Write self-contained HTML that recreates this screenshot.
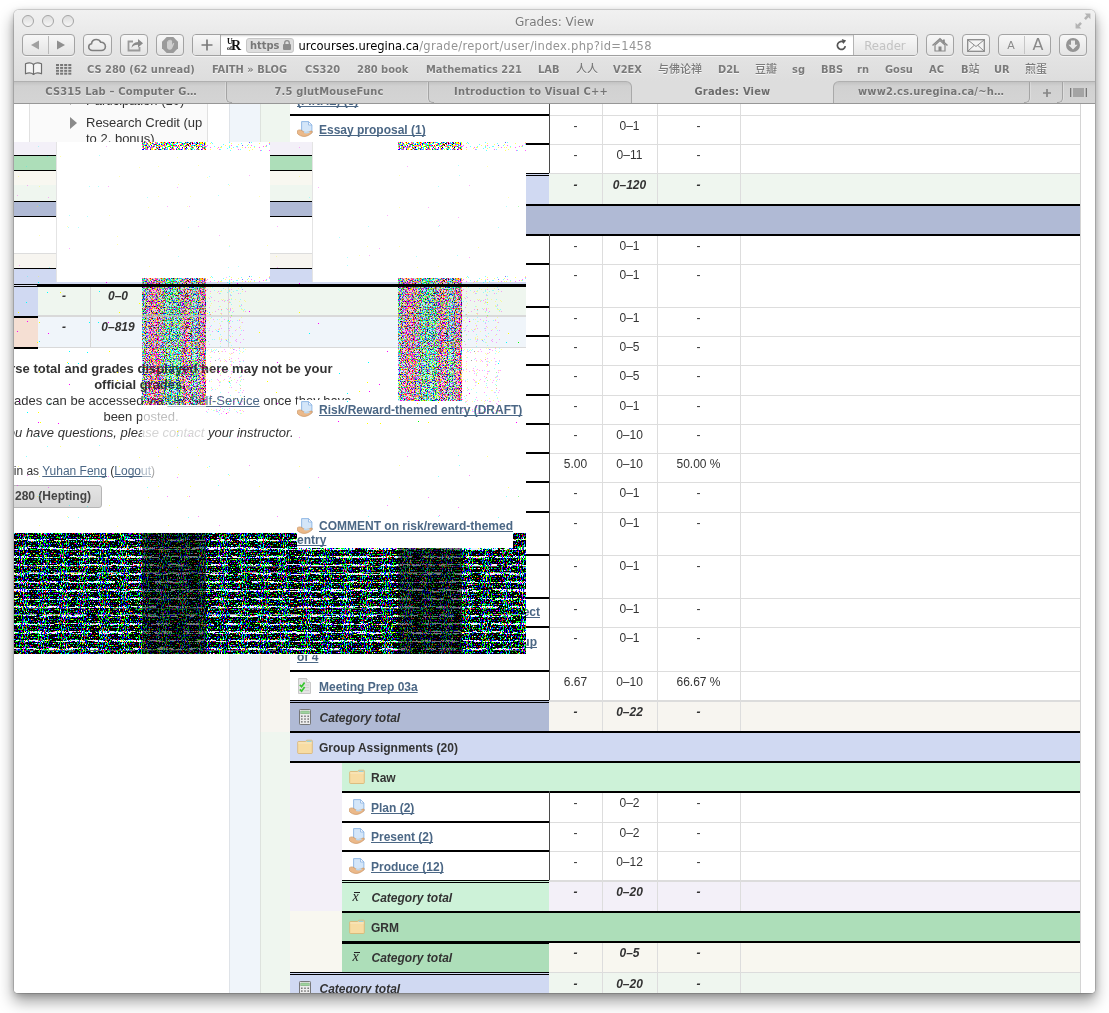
<!DOCTYPE html><html><head><meta charset="utf-8"><title>Grades: View</title><style>
*{box-sizing:border-box;margin:0;padding:0}
html,body{width:1109px;height:1013px;overflow:hidden;background:#fff}
body{position:relative;font-family:"Liberation Sans","Noto Sans CJK SC",sans-serif;font-size:12px;color:#333}
.a{position:absolute}
#win{position:absolute;left:14px;top:10px;width:1081px;height:983px;border-radius:5px 5px 4px 4px;overflow:hidden;background:#fff;
 box-shadow:0 0 0 1px rgba(0,0,0,.13),0 8px 15px 1px rgba(0,0,0,.36),0 2px 6px rgba(0,0,0,.2)}
#pg{position:absolute;left:-14px;top:-10px;width:1109px;height:1013px}
#tb{position:absolute;left:14px;top:10px;width:1081px;height:71px;background:linear-gradient(#f1f1f1,#e9e9e9 35%,#dddddd)}
#tabs{position:absolute;left:14px;top:81px;width:1081px;height:23px;background:#dddddd;border-bottom:1px solid #979797}
.ui{font-family:"DejaVu Sans Condensed","DejaVu Sans","Noto Sans CJK SC",sans-serif}
.btn{position:absolute;top:34px;height:22px;border:1px solid #a3a3a3;border-radius:4px;background:linear-gradient(#f7f7f7,#e4e4e4);box-shadow:0 1px 0 rgba(255,255,255,.6)}
.bm{position:absolute;top:63px;font:bold 11px "DejaVu Sans Condensed","Noto Sans CJK SC",sans-serif;color:#7a7a7a;text-shadow:0 1px 0 rgba(255,255,255,.75);white-space:nowrap;line-height:14px}
.tab{position:absolute;top:81px;height:23px;font:bold 11px "DejaVu Sans Condensed",sans-serif;color:#757575;text-shadow:0 1px 0 rgba(255,255,255,.6);text-align:center;line-height:22px;white-space:nowrap;letter-spacing:.2px}
span.cj{font-weight:500;font-size:11px}
.tab.on{color:#6c6c6c}
.tabgrp{position:absolute;top:81px;height:22px;background:linear-gradient(#c3c3c3,#d1d1d1 4px,#d4d4d4);border-top:1px solid #b0b0b0}
.tabsep{position:absolute;top:82px;width:6px;height:21px;border-left:1px solid #a4a4a4;border-bottom:1px solid #a4a4a4;border-radius:0 0 0 5px;box-shadow:-1px 0 0 rgba(255,255,255,.25)}
.tabsep.r{border-left:none;border-right:1px solid #a4a4a4;border-radius:0 0 5px 0;box-shadow:1px 0 0 rgba(255,255,255,.25)}
.hl{position:absolute;height:1px;background:#ddd}
.vl{position:absolute;width:1px;background:#ddd}
.bl{position:absolute;height:2px;background:#000}
.cell{position:absolute}
.t{position:absolute;white-space:nowrap;line-height:14px;font-size:12px;color:#333}
.c{text-align:center}
.bi{font-weight:bold;font-style:italic}
.b{font-weight:bold}
.lk{color:#4b6785;text-decoration:underline;font-weight:bold;text-decoration-skip-ink:none}
.ic{position:absolute;width:16px;height:16px}
</style></head><body>
<svg width="0" height="0" style="position:absolute">
<defs>
<filter id="nz" x="0" y="0" width="100%" height="100%" color-interpolation-filters="sRGB"><feTurbulence type="fractalNoise" baseFrequency="0.85" numOctaves="2" seed="7" stitchTiles="noStitch"/><feComponentTransfer><feFuncR type="discrete" tableValues="0 1"/><feFuncG type="discrete" tableValues="0 1"/><feFuncB type="discrete" tableValues="0 1"/><feFuncA type="linear" slope="0" intercept="1"/></feComponentTransfer></filter>
<filter id="sp" x="0" y="0" width="100%" height="100%" color-interpolation-filters="sRGB"><feTurbulence type="fractalNoise" baseFrequency="0.9" numOctaves="1" seed="11"/><feComponentTransfer><feFuncR type="discrete" tableValues="0 1 1 1 1 1 1 1"/><feFuncG type="discrete" tableValues="0 1 1 1 1 1 1 1"/><feFuncB type="discrete" tableValues="0 1 1 1 1 1 1 1"/><feFuncA type="linear" slope="0" intercept="1"/></feComponentTransfer></filter>
<g id="i-hand"><path d="M4.600 .6h6.900l3.400 3.400v8H4.600z" fill="#d4e6f9" stroke="#8ab3e3" stroke-width=".9"/><path d="M11.500 .6v3.400h3.400z" fill="#fff" stroke="#8ab3e3" stroke-width=".8" stroke-linejoin="round"/><path d="M.4 9.700c1.400-1 3.100-1 4.400-.2l2.200 1.600c1.600.8 4.300.2 6.300-.8 1.500-.6 2.600.3 1.900 1.200-1.700 2-4.400 3.500-7.100 3.900-3 .4-6.100-1-7.700-2.900z" fill="#ebb98a" stroke="#c58b55" stroke-width=".6"/><path d="M7 11.300c1.700.6 4 .3 5.600-.4" stroke="#bcd7ee" stroke-width="1.500" fill="none"/></g>
<g id="i-folder"><path d="M.7 3.300c0-.5.3-.8.800-.8H8.500l1.200-1.300h4.800c.5 0 .8.300.8.800V13.700c0 .5-.3.800-.8.800H1.500c-.5 0-.8-.3-.8-.8z" fill="#f7dca3" stroke="#d9b270" stroke-width=".8"/><path d="M10 1.700h4.500v1H9.200z" fill="#7fd0ea"/><path d="M1.200 4h13.600" stroke="#fbeccb" stroke-width=".8"/></g>
<g id="i-calc"><rect x="2.500" y=".5" width="11" height="15" rx=".8" fill="#ececec" stroke="#6c6c6c" stroke-width=".9"/><rect x="3.800" y="2" width="8.400" height="2.800" fill="#9ed39e" stroke="#6d9a6d" stroke-width=".4"/><g fill="#7b7b7b"><rect x="4" y="6.500" width="1.600" height="1.500"/><rect x="7.200" y="6.500" width="1.600" height="1.500"/><rect x="10.400" y="6.500" width="1.600" height="1.500"/><rect x="4" y="9.300" width="1.600" height="1.500"/><rect x="7.200" y="9.300" width="1.600" height="1.500"/><rect x="10.400" y="9.300" width="1.600" height="1.500"/><rect x="4" y="12.100" width="1.600" height="1.500"/><rect x="7.200" y="12.100" width="1.600" height="1.500"/><rect x="10.400" y="12.100" width="1.600" height="1.500"/></g></g>
<g id="i-check"><path d="M1.500.5h8l4 4v11h-12z" fill="#e4e4e4" stroke="#bdbdbd" stroke-width=".8"/><path d="M9.500.5v4h4" fill="#f6f6f6" stroke="#bdbdbd" stroke-width=".7"/><path d="M7.500 7h4.500M7.500 9.500h4.500M7.500 12.500h4.500" stroke="#cfcfcf" stroke-width=".9"/><path d="M2.800 6.800l1.800 1.900 3-4.200" stroke="#34c52c" stroke-width="1.700" fill="none"/><path d="M2.800 11.300l1.800 1.900 3-4.200" stroke="#34c52c" stroke-width="1.700" fill="none"/></g>
</defs></svg>
<div id="win"><div id="pg">
<div class="a" id="content" style="left:14px;top:104px;width:1081px;height:889px;background:#fff;overflow:hidden"><div class="a" style="left:-14px;top:-104px;width:1109px;height:1013px">
<div class="a" style="left:28.500px;top:90px;width:179.500px;height:300px;background:#fafafa;border:1px solid #e1e1e1"></div>
<div class="t" style="left:86px;top:93px;font-size:13px;line-height:16px;color:#333">Participation (10)</div>
<div class="t" style="left:86px;top:115px;font-size:13px;line-height:16px;color:#333;white-space:normal;width:125px">Research Credit (up to 2, bonus)</div>
<svg class="a" style="left:69px;top:93px" width="9" height="12"><path d="M1 0l7 6-7 6z" fill="#8a8a8a"/></svg>
<svg class="a" style="left:69px;top:117px" width="9" height="12"><path d="M1 0l7 6-7 6z" fill="#8a8a8a"/></svg>
<div class="a" style="left:228.500px;top:104px;width:31.500px;height:890px;background:#f0f5fa;border-left:1px solid #dfe3e8"></div>
<div class="a" style="left:260px;top:104px;width:30px;height:102px;background:#eff6ef;border-left:1px solid #dde2dd"></div>
<div class="a" style="left:260px;top:206px;width:30px;height:526px;background:#f7f5f0;border-left:1px solid #e2e0dc"></div>
<div class="a" style="left:260px;top:732px;width:30px;height:262px;background:#eff6ef;border-left:1px solid #dde2dd"></div>
<div class="a" style="left:290px;top:761px;width:52px;height:150px;background:#f3f0f8"></div>
<div class="a" style="left:290px;top:911px;width:52px;height:61px;background:#f8f7f0"></div>
<div class="hl" style="left:549.0px;top:86.0px;width:531.0px"></div>
<div class="bl" style="left:290.0px;top:85.0px;width:259.0px"></div>
<div class="t c" style="left:549.0px;top:90.0px;width:53.0px">-</div>
<div class="t c" style="left:602.0px;top:90.0px;width:55.0px">0–1</div>
<div class="t c" style="left:657.0px;top:90.0px;width:83.0px">-</div>
<div class="t lk" style="left:297.0px;top:93.5px">(FINAL) (5)</div>
<div class="hl" style="left:549.0px;top:115.0px;width:531.0px"></div>
<div class="bl" style="left:290.0px;top:114.0px;width:259.0px"></div>
<div class="t c" style="left:549.0px;top:119.0px;width:53.0px">-</div>
<div class="t c" style="left:602.0px;top:119.0px;width:55.0px">0–1</div>
<div class="t c" style="left:657.0px;top:119.0px;width:83.0px">-</div>
<svg class="ic" style="left:297.0px;top:121.3px" viewBox="0 0 16 16"><use href="#i-hand"/></svg>
<div class="t lk" style="left:319.0px;top:123.3px">Essay proposal (1)</div>
<div class="hl" style="left:549.0px;top:144.0px;width:531.0px"></div>
<div class="bl" style="left:290.0px;top:143.0px;width:259.0px"></div>
<div class="t c" style="left:549.0px;top:148.0px;width:53.0px">-</div>
<div class="t c" style="left:602.0px;top:148.0px;width:55.0px">0–11</div>
<div class="t c" style="left:657.0px;top:148.0px;width:83.0px">-</div>
<svg class="ic" style="left:297.0px;top:150.6px" viewBox="0 0 16 16"><use href="#i-hand"/></svg>
<div class="t lk" style="left:319.0px;top:152.6px">Essay (11)</div>
<div class="a" style="left:549.0px;top:173.5px;width:531.0px;height:31.5px;background:#eff6ef"></div>
<div class="a" style="left:549.0px;top:172.8px;width:531.0px;height:1.400px;background:#dcdcdc"></div>
<div class="a" style="left:290.0px;top:172.5px;width:259.0px;height:31.5px;background:#d0d9f2"></div>
<div class="a" style="left:290.0px;top:172.5px;width:259.0px;height:1.100px;background:#000"></div>
<div class="a" style="left:290.0px;top:174.6px;width:259.0px;height:1.200px;background:#000"></div>
<div class="t c bi" style="left:549.0px;top:177.5px;width:53.0px">-</div>
<div class="t c bi" style="left:602.0px;top:177.5px;width:55.0px">0–120</div>
<div class="t c bi" style="left:657.0px;top:177.5px;width:83.0px">-</div>
<svg class="ic" style="left:297.0px;top:181.8px" viewBox="0 0 16 16"><use href="#i-calc"/></svg>
<div class="t bi" style="left:319.5px;top:183.2px">Category total</div>
<div class="a" style="left:290.0px;top:204.0px;width:790.0px;height:30.0px;background:#b0bad5"></div>
<div class="bl" style="left:290.0px;top:204.0px;width:790.0px"></div>
<svg class="ic" style="left:297.0px;top:212.0px" viewBox="0 0 16 16"><use href="#i-folder"/></svg>
<div class="t b" style="left:319.0px;top:213.5px">Individual Assignments (22)</div>
<div class="hl" style="left:549.0px;top:235.0px;width:531.0px"></div>
<div class="bl" style="left:290.0px;top:234.0px;width:259.0px"></div>
<div class="t c" style="left:549.0px;top:239.0px;width:53.0px">-</div>
<div class="t c" style="left:602.0px;top:239.0px;width:55.0px">0–1</div>
<div class="t c" style="left:657.0px;top:239.0px;width:83.0px">-</div>
<svg class="ic" style="left:297.0px;top:241.3px" viewBox="0 0 16 16"><use href="#i-hand"/></svg>
<div class="t lk" style="left:319.0px;top:243.3px">Meeting Prep 01</div>
<div class="hl" style="left:549.0px;top:264.0px;width:531.0px"></div>
<div class="bl" style="left:290.0px;top:263.0px;width:259.0px"></div>
<div class="t c" style="left:549.0px;top:268.0px;width:53.0px">-</div>
<div class="t c" style="left:602.0px;top:268.0px;width:55.0px">0–1</div>
<div class="t c" style="left:657.0px;top:268.0px;width:83.0px">-</div>
<svg class="ic" style="left:297.0px;top:277.3px" viewBox="0 0 16 16"><use href="#i-hand"/></svg>
<div class="t lk" style="left:319.0px;top:279.3px">Meeting Prep 02</div>
<div class="hl" style="left:549.0px;top:307.0px;width:531.0px"></div>
<div class="bl" style="left:290.0px;top:306.0px;width:259.0px"></div>
<div class="t c" style="left:549.0px;top:311.0px;width:53.0px">-</div>
<div class="t c" style="left:602.0px;top:311.0px;width:55.0px">0–1</div>
<div class="t c" style="left:657.0px;top:311.0px;width:83.0px">-</div>
<svg class="ic" style="left:297.0px;top:313.3px" viewBox="0 0 16 16"><use href="#i-hand"/></svg>
<div class="t lk" style="left:319.0px;top:315.3px">Meeting Prep 03</div>
<div class="hl" style="left:549.0px;top:336.0px;width:531.0px"></div>
<div class="bl" style="left:290.0px;top:335.0px;width:259.0px"></div>
<div class="t c" style="left:549.0px;top:340.0px;width:53.0px">-</div>
<div class="t c" style="left:602.0px;top:340.0px;width:55.0px">0–5</div>
<div class="t c" style="left:657.0px;top:340.0px;width:83.0px">-</div>
<svg class="ic" style="left:297.0px;top:342.3px" viewBox="0 0 16 16"><use href="#i-hand"/></svg>
<div class="t lk" style="left:319.0px;top:344.3px">Journal entry 1</div>
<div class="hl" style="left:549.0px;top:365.0px;width:531.0px"></div>
<div class="bl" style="left:290.0px;top:364.0px;width:259.0px"></div>
<div class="t c" style="left:549.0px;top:369.0px;width:53.0px">-</div>
<div class="t c" style="left:602.0px;top:369.0px;width:55.0px">0–5</div>
<div class="t c" style="left:657.0px;top:369.0px;width:83.0px">-</div>
<svg class="ic" style="left:297.0px;top:371.8px" viewBox="0 0 16 16"><use href="#i-hand"/></svg>
<div class="t lk" style="left:319.0px;top:373.8px">Journal entry 2</div>
<div class="hl" style="left:549.0px;top:395.0px;width:531.0px"></div>
<div class="bl" style="left:290.0px;top:394.0px;width:259.0px"></div>
<div class="t c" style="left:549.0px;top:399.0px;width:53.0px">-</div>
<div class="t c" style="left:602.0px;top:399.0px;width:55.0px">0–1</div>
<div class="t c" style="left:657.0px;top:399.0px;width:83.0px">-</div>
<svg class="ic" style="left:297.0px;top:401.3px" viewBox="0 0 16 16"><use href="#i-hand"/></svg>
<div class="t lk" style="left:319.0px;top:403.3px">Risk/Reward-themed entry (DRAFT)</div>
<div class="hl" style="left:549.0px;top:424.0px;width:531.0px"></div>
<div class="bl" style="left:290.0px;top:423.0px;width:259.0px"></div>
<div class="t c" style="left:549.0px;top:428.0px;width:53.0px">-</div>
<div class="t c" style="left:602.0px;top:428.0px;width:55.0px">0–10</div>
<div class="t c" style="left:657.0px;top:428.0px;width:83.0px">-</div>
<div class="hl" style="left:549.0px;top:453.0px;width:531.0px"></div>
<div class="bl" style="left:290.0px;top:452.0px;width:259.0px"></div>
<div class="t c" style="left:549.0px;top:457.0px;width:53.0px">5.00</div>
<div class="t c" style="left:602.0px;top:457.0px;width:55.0px">0–10</div>
<div class="t c" style="left:657.0px;top:457.0px;width:83.0px">50.00 %</div>
<div class="hl" style="left:549.0px;top:482.0px;width:531.0px"></div>
<div class="bl" style="left:290.0px;top:481.0px;width:259.0px"></div>
<div class="t c" style="left:549.0px;top:486.0px;width:53.0px">-</div>
<div class="t c" style="left:602.0px;top:486.0px;width:55.0px">0–1</div>
<div class="t c" style="left:657.0px;top:486.0px;width:83.0px">-</div>
<div class="hl" style="left:549.0px;top:511.7px;width:531.0px"></div>
<div class="bl" style="left:290.0px;top:510.7px;width:259.0px"></div>
<div class="t c" style="left:549.0px;top:515.7px;width:53.0px">-</div>
<div class="t c" style="left:602.0px;top:515.7px;width:55.0px">0–1</div>
<div class="t c" style="left:657.0px;top:515.7px;width:83.0px">-</div>
<svg class="ic" style="left:297.0px;top:517.7px" viewBox="0 0 16 16"><use href="#i-hand"/></svg>
<div class="t lk" style="left:297.0px;top:518.7px;white-space:normal;width:235px;text-indent:22px">COMMENT on risk/reward-themed<br>entry</div>
<div class="hl" style="left:549.0px;top:555.0px;width:531.0px"></div>
<div class="bl" style="left:290.0px;top:554.0px;width:259.0px"></div>
<div class="t c" style="left:549.0px;top:559.0px;width:53.0px">-</div>
<div class="t c" style="left:602.0px;top:559.0px;width:55.0px">0–1</div>
<div class="t c" style="left:657.0px;top:559.0px;width:83.0px">-</div>
<div class="hl" style="left:549.0px;top:598.0px;width:531.0px"></div>
<div class="bl" style="left:290.0px;top:597.0px;width:259.0px"></div>
<div class="t c" style="left:549.0px;top:602.0px;width:53.0px">-</div>
<div class="t c" style="left:602.0px;top:602.0px;width:55.0px">0–1</div>
<div class="t c" style="left:657.0px;top:602.0px;width:83.0px">-</div>
<div class="hl" style="left:549.0px;top:627.0px;width:531.0px"></div>
<div class="bl" style="left:290.0px;top:626.0px;width:259.0px"></div>
<div class="t c" style="left:549.0px;top:631.0px;width:53.0px">-</div>
<div class="t c" style="left:602.0px;top:631.0px;width:55.0px">0–1</div>
<div class="t c" style="left:657.0px;top:631.0px;width:83.0px">-</div>
<div class="hl" style="left:549.0px;top:671.0px;width:531.0px"></div>
<div class="bl" style="left:290.0px;top:670.0px;width:259.0px"></div>
<div class="t c" style="left:549.0px;top:675.0px;width:53.0px">6.67</div>
<div class="t c" style="left:602.0px;top:675.0px;width:55.0px">0–10</div>
<div class="t c" style="left:657.0px;top:675.0px;width:83.0px">66.67 %</div>
<svg class="ic" style="left:297.0px;top:677.8px" viewBox="0 0 16 16"><use href="#i-check"/></svg>
<div class="t lk" style="left:319.0px;top:679.8px">Meeting Prep 03a</div>
<div class="a" style="left:549.0px;top:701.0px;width:531.0px;height:31.0px;background:#f7f5f0"></div>
<div class="a" style="left:549.0px;top:700.3px;width:531.0px;height:1.400px;background:#dcdcdc"></div>
<div class="a" style="left:290.0px;top:700.0px;width:259.0px;height:31.0px;background:#b0bad5"></div>
<div class="a" style="left:290.0px;top:700.0px;width:259.0px;height:1.100px;background:#000"></div>
<div class="a" style="left:290.0px;top:702.1px;width:259.0px;height:1.200px;background:#000"></div>
<div class="t c bi" style="left:549.0px;top:705.0px;width:53.0px">-</div>
<div class="t c bi" style="left:602.0px;top:705.0px;width:55.0px">0–22</div>
<div class="t c bi" style="left:657.0px;top:705.0px;width:83.0px">-</div>
<svg class="ic" style="left:297.0px;top:709.0px" viewBox="0 0 16 16"><use href="#i-calc"/></svg>
<div class="t bi" style="left:319.5px;top:710.5px">Category total</div>
<div class="a" style="left:290.0px;top:731.0px;width:790.0px;height:30.0px;background:#d0d9f2"></div>
<div class="bl" style="left:290.0px;top:731.0px;width:790.0px"></div>
<svg class="ic" style="left:297.0px;top:739.0px" viewBox="0 0 16 16"><use href="#i-folder"/></svg>
<div class="t b" style="left:319.0px;top:740.5px">Group Assignments (20)</div>
<div class="a" style="left:342.0px;top:761.0px;width:738.0px;height:30.0px;background:#cdf2d8"></div>
<div class="bl" style="left:342.0px;top:761.0px;width:738.0px"></div>
<svg class="ic" style="left:349.0px;top:769.0px" viewBox="0 0 16 16"><use href="#i-folder"/></svg>
<div class="t b" style="left:371.0px;top:770.5px">Raw</div>
<div class="hl" style="left:549.0px;top:792.0px;width:531.0px"></div>
<div class="bl" style="left:342.0px;top:791.0px;width:207.0px"></div>
<div class="t c" style="left:549.0px;top:796.0px;width:53.0px">-</div>
<div class="t c" style="left:602.0px;top:796.0px;width:55.0px">0–2</div>
<div class="t c" style="left:657.0px;top:796.0px;width:83.0px">-</div>
<svg class="ic" style="left:349.0px;top:798.8px" viewBox="0 0 16 16"><use href="#i-hand"/></svg>
<div class="t lk" style="left:371.0px;top:800.8px">Plan (2)</div>
<div class="hl" style="left:549.0px;top:822.0px;width:531.0px"></div>
<div class="bl" style="left:342.0px;top:821.0px;width:207.0px"></div>
<div class="t c" style="left:549.0px;top:826.0px;width:53.0px">-</div>
<div class="t c" style="left:602.0px;top:826.0px;width:55.0px">0–2</div>
<div class="t c" style="left:657.0px;top:826.0px;width:83.0px">-</div>
<svg class="ic" style="left:349.0px;top:828.3px" viewBox="0 0 16 16"><use href="#i-hand"/></svg>
<div class="t lk" style="left:371.0px;top:830.3px">Present (2)</div>
<div class="hl" style="left:549.0px;top:851.0px;width:531.0px"></div>
<div class="bl" style="left:342.0px;top:850.0px;width:207.0px"></div>
<div class="t c" style="left:549.0px;top:855.0px;width:53.0px">-</div>
<div class="t c" style="left:602.0px;top:855.0px;width:55.0px">0–12</div>
<div class="t c" style="left:657.0px;top:855.0px;width:83.0px">-</div>
<svg class="ic" style="left:349.0px;top:857.8px" viewBox="0 0 16 16"><use href="#i-hand"/></svg>
<div class="t lk" style="left:371.0px;top:859.8px">Produce (12)</div>
<div class="a" style="left:549.0px;top:881.0px;width:531.0px;height:31.0px;background:#f3f0f8"></div>
<div class="a" style="left:549.0px;top:880.3px;width:531.0px;height:1.400px;background:#dcdcdc"></div>
<div class="a" style="left:342.0px;top:880.0px;width:207.0px;height:31.0px;background:#cdf2d8"></div>
<div class="a" style="left:342.0px;top:880.0px;width:207.0px;height:1.100px;background:#000"></div>
<div class="a" style="left:342.0px;top:882.1px;width:207.0px;height:1.200px;background:#000"></div>
<div class="t c bi" style="left:549.0px;top:885.0px;width:53.0px">-</div>
<div class="t c bi" style="left:602.0px;top:885.0px;width:55.0px">0–20</div>
<div class="t c bi" style="left:657.0px;top:885.0px;width:83.0px">-</div>
<div class="t" style="left:352.5px;top:888.5px;font:italic 14px 'Liberation Serif',serif;color:#222;line-height:16px">x</div><div class="a" style="left:354.0px;top:891.5px;width:6px;height:1px;background:#222"></div>
<div class="t bi" style="left:371.5px;top:890.5px">Category total</div>
<div class="a" style="left:342.0px;top:911.0px;width:738.0px;height:30.0px;background:#addeb9"></div>
<div class="bl" style="left:342.0px;top:911.0px;width:738.0px"></div>
<svg class="ic" style="left:349.0px;top:919.0px" viewBox="0 0 16 16"><use href="#i-folder"/></svg>
<div class="t b" style="left:371.0px;top:920.5px">GRM</div>
<div class="a" style="left:549.0px;top:942.0px;width:531.0px;height:30.6px;background:#f8f7f0"></div>
<div class="a" style="left:549.0px;top:941.3px;width:531.0px;height:1.400px;background:#dcdcdc"></div>
<div class="a" style="left:342.0px;top:941.0px;width:207.0px;height:30.6px;background:#addeb9"></div>
<div class="a" style="left:342.0px;top:941.0px;width:207.0px;height:3px;background:#000"></div>
<div class="t c bi" style="left:549.0px;top:946.0px;width:53.0px">-</div>
<div class="t c bi" style="left:602.0px;top:946.0px;width:55.0px">0–5</div>
<div class="t c bi" style="left:657.0px;top:946.0px;width:83.0px">-</div>
<div class="t" style="left:352.5px;top:949.3px;font:italic 14px 'Liberation Serif',serif;color:#222;line-height:16px">x</div><div class="a" style="left:354.0px;top:952.3px;width:6px;height:1px;background:#222"></div>
<div class="t bi" style="left:371.5px;top:951.3px">Category total</div>
<div class="a" style="left:549.0px;top:972.6px;width:531.0px;height:31.4px;background:#eff6ef"></div>
<div class="a" style="left:549.0px;top:971.9px;width:531.0px;height:1.400px;background:#dcdcdc"></div>
<div class="a" style="left:290.0px;top:971.6px;width:259.0px;height:31.4px;background:#d0d9f2"></div>
<div class="a" style="left:290.0px;top:971.6px;width:259.0px;height:1.100px;background:#000"></div>
<div class="a" style="left:290.0px;top:973.7px;width:259.0px;height:1.200px;background:#000"></div>
<div class="t c bi" style="left:549.0px;top:976.6px;width:53.0px">-</div>
<div class="t c bi" style="left:602.0px;top:976.6px;width:55.0px">0–20</div>
<div class="t c bi" style="left:657.0px;top:976.6px;width:83.0px">-</div>
<svg class="ic" style="left:297.0px;top:980.8px" viewBox="0 0 16 16"><use href="#i-calc"/></svg>
<div class="t bi" style="left:319.5px;top:982.3px">Category total</div>
<div class="bl" style="left:290.0px;top:234.0px;width:790.0px"></div>
<div class="bl" style="left:290.0px;top:761.0px;width:790.0px"></div>
<div class="bl" style="left:342.0px;top:791.0px;width:738.0px"></div>
<div class="bl" style="left:342.0px;top:941.0px;width:738.0px"></div>
<div class="bl" style="left:342.0px;top:911.0px;width:738.0px"></div>
<div class="vl" style="left:602.0px;top:104.0px;height:100.0px"></div>
<div class="vl" style="left:602.0px;top:236.0px;height:495.0px"></div>
<div class="vl" style="left:602.0px;top:793.0px;height:118.0px"></div>
<div class="vl" style="left:602.0px;top:943.0px;height:57.0px"></div>
<div class="vl" style="left:657.0px;top:104.0px;height:100.0px"></div>
<div class="vl" style="left:657.0px;top:236.0px;height:495.0px"></div>
<div class="vl" style="left:657.0px;top:793.0px;height:118.0px"></div>
<div class="vl" style="left:657.0px;top:943.0px;height:57.0px"></div>
<div class="vl" style="left:740.0px;top:104.0px;height:100.0px"></div>
<div class="vl" style="left:740.0px;top:236.0px;height:495.0px"></div>
<div class="vl" style="left:740.0px;top:793.0px;height:118.0px"></div>
<div class="vl" style="left:740.0px;top:943.0px;height:57.0px"></div>
<div class="vl" style="left:1080.0px;top:104px;height:890px;background:#d4d4d4"></div>
<div class="a" style="left:549.0px;top:104.0px;width:1px;height:10.0px;background:#4a4a4a"></div>
<div class="a" style="left:549.0px;top:114.0px;width:1px;height:29.0px;background:#4a4a4a"></div>
<div class="a" style="left:549.0px;top:143.0px;width:1px;height:29.5px;background:#4a4a4a"></div>
<div class="a" style="left:549.0px;top:234.0px;width:1px;height:29.0px;background:#4a4a4a"></div>
<div class="a" style="left:549.0px;top:263.0px;width:1px;height:43.0px;background:#4a4a4a"></div>
<div class="a" style="left:549.0px;top:306.0px;width:1px;height:29.0px;background:#4a4a4a"></div>
<div class="a" style="left:549.0px;top:335.0px;width:1px;height:29.0px;background:#4a4a4a"></div>
<div class="a" style="left:549.0px;top:364.0px;width:1px;height:30.0px;background:#4a4a4a"></div>
<div class="a" style="left:549.0px;top:394.0px;width:1px;height:29.0px;background:#4a4a4a"></div>
<div class="a" style="left:549.0px;top:423.0px;width:1px;height:29.0px;background:#4a4a4a"></div>
<div class="a" style="left:549.0px;top:452.0px;width:1px;height:29.0px;background:#4a4a4a"></div>
<div class="a" style="left:549.0px;top:481.0px;width:1px;height:29.7px;background:#4a4a4a"></div>
<div class="a" style="left:549.0px;top:510.7px;width:1px;height:43.3px;background:#4a4a4a"></div>
<div class="a" style="left:549.0px;top:554.0px;width:1px;height:43.0px;background:#4a4a4a"></div>
<div class="a" style="left:549.0px;top:597.0px;width:1px;height:29.0px;background:#4a4a4a"></div>
<div class="a" style="left:549.0px;top:626.0px;width:1px;height:44.0px;background:#4a4a4a"></div>
<div class="a" style="left:549.0px;top:670.0px;width:1px;height:30.0px;background:#4a4a4a"></div>
<div class="a" style="left:549.0px;top:791.0px;width:1px;height:30.0px;background:#4a4a4a"></div>
<div class="a" style="left:549.0px;top:821.0px;width:1px;height:29.0px;background:#4a4a4a"></div>
<div class="a" style="left:549.0px;top:850.0px;width:1px;height:30.0px;background:#4a4a4a"></div>
<div class="a" style="left:526px;top:600px;width:22px;height:70px;overflow:hidden"><div class="t lk" style="right:8px;top:5px">Group project</div><div class="t lk" style="right:11px;top:35px">Peer evaluation of group</div></div>
<div class="t lk" style="left:297px;top:650px">of 4</div>
</div></div>
<svg width="0" height="0" style="position:absolute"><defs>
<filter id="gfull" x="0" y="0" width="100%" height="100%" color-interpolation-filters="sRGB"><feTurbulence type="fractalNoise" baseFrequency="0.85" numOctaves="1" seed="5" result="t1"/><feTurbulence type="fractalNoise" baseFrequency="0.85" numOctaves="1" seed="31" result="t2"/><feTurbulence type="fractalNoise" baseFrequency="0.85" numOctaves="1" seed="77" result="t3"/><feColorMatrix in="t1" type="matrix" values="1 0 0 0 0  0 0 0 0 0  0 0 0 0 0  0 0 0 0 1" result="c1"/><feColorMatrix in="t2" type="matrix" values="0 0 0 0 0  1 0 0 0 0  0 0 0 0 0  0 0 0 0 1" result="c2"/><feColorMatrix in="t3" type="matrix" values="0 0 0 0 0  0 0 0 0 0  1 0 0 0 0  0 0 0 0 1" result="c3"/><feComposite in="c1" in2="c2" operator="arithmetic" k1="0" k2="1" k3="1" k4="0" result="c12"/><feComposite in="c12" in2="c3" operator="arithmetic" k1="0" k2="1" k3="1" k4="0"/><feColorMatrix type="matrix" values="1 0 0 0 0  0 1 0 0 0  -.15 -.15 .8 0 .235  0 0 0 0 1"/><feComponentTransfer><feFuncR type="discrete" tableValues="0 0 0 0 0 0 0 0 0 0 0 0 0 0 0 0 0 0 1 1 1 1 1 1 1 1 1 1 1 1 1 1 1 1 1 1 1 1 1 1"/><feFuncG type="discrete" tableValues="0 0 0 0 0 0 0 0 0 0 0 0 0 0 0 0 0 0 1 1 1 1 1 1 1 1 1 1 1 1 1 1 1 1 1 1 1 1 1 1"/><feFuncB type="discrete" tableValues="0 0 0 0 0 0 0 0 0 0 0 0 0 0 0 0 0 0 1 1 1 1 1 1 1 1 1 1 1 1 1 1 1 1 1 1 1 1 1 1"/><feFuncA type="linear" slope="0" intercept="1"/></feComponentTransfer></filter>
<filter id="gsp1" x="0" y="0" width="100%" height="100%" color-interpolation-filters="sRGB"><feTurbulence type="fractalNoise" baseFrequency="0.9" numOctaves="1" seed="9"/><feComponentTransfer><feFuncR type="discrete" tableValues="0 0 0 0 1 1 1 1 1 1 1 1 1 1 1 1 1 1 1 1"/><feFuncG type="discrete" tableValues="0 0 0 0 1 1 1 1 1 1 1 1 1 1 1 1 1 1 1 1"/><feFuncB type="discrete" tableValues="0 0 0 0 1 1 1 1 1 1 1 1 1 1 1 1 1 1 1 1"/><feFuncA type="linear" slope="0" intercept="1"/></feComponentTransfer><feColorMatrix type="matrix" values="1 0 0 0 0  0 1 0 0 0  0 0 1 0 0  -1 -1 -1 0 3"/></filter>
<filter id="gsp2" x="0" y="0" width="100%" height="100%" color-interpolation-filters="sRGB"><feTurbulence type="fractalNoise" baseFrequency="0.9" numOctaves="1" seed="21"/><feComponentTransfer><feFuncR type="discrete" tableValues="0 0 0 1 1 1 1 1 1 1"/><feFuncG type="discrete" tableValues="0 0 0 1 1 1 1 1 1 1"/><feFuncB type="discrete" tableValues="0 0 0 1 1 1 1 1 1 1"/><feFuncA type="linear" slope="0" intercept="1"/></feComponentTransfer><feColorMatrix type="matrix" values="1 0 0 0 0  0 1 0 0 0  0 0 1 0 0  -1 -1 -1 0 3"/></filter>
<filter id="gdk" x="0" y="0" width="100%" height="100%" color-interpolation-filters="sRGB"><feTurbulence type="fractalNoise" baseFrequency="0.95 0.5" numOctaves="1" seed="13"/><feComponentTransfer><feFuncR type="discrete" tableValues="0 0 0 0 0 0 0 0 0 0 0 0 0 0 0 0 0 0 0 0 0 0 0 0 0 0 1 1 1 1 1 1 1 1 1 1 1 1 1 1"/><feFuncG type="discrete" tableValues="0 0 0 0 0 0 0 0 0 0 0 0 0 0 0 0 0 0 0 0 0 0 0 1 1 1 1 1 1 1 1 1 1 1 1 1 1 1 1 1"/><feFuncB type="discrete" tableValues="0 0 0 0 0 0 0 0 0 0 0 0 0 0 0 0 0 0 0 0 0 0 0 1 1 1 1 1 1 1 1 1 1 1 1 1 1 1 1 1"/><feFuncA type="linear" slope="0" intercept="1"/></feComponentTransfer><feColorMatrix type="matrix" values="1 0 0 0 0  0 1 0 0 0  0 0 1 0 0  1 1 1 0 0"/></filter>
<filter id="gbk" x="0" y="0" width="100%" height="100%" color-interpolation-filters="sRGB"><feTurbulence type="fractalNoise" baseFrequency="0.95 0.25" numOctaves="1" seed="17"/><feColorMatrix type="matrix" values="0 0 0 0 0  0 0 0 0 0  0 0 0 0 0  1 0 0 0 0"/><feComponentTransfer><feFuncA type="discrete" tableValues="1 1 1 1 1 1 1 1 1 1 0 0 0 0 0 0 0 0 0 0"/></feComponentTransfer></filter>
<filter id="gstk" x="0" y="0" width="100%" height="100%" color-interpolation-filters="sRGB"><feTurbulence type="fractalNoise" baseFrequency="0.07 0.9" numOctaves="1" seed="23"/><feColorMatrix type="matrix" values="0 0 0 0 .93  0 0 0 0 .95  0 0 0 0 1  1 0 0 0 0"/><feComponentTransfer><feFuncA type="discrete" tableValues="0 0 0 0 0 0 0 0 0 0 0 0 0 0 0 0 0 0 1 1 1 1 1 1 1 1 1 1 1 1 1 1 1 1 1 1 1 1 1 1"/></feComponentTransfer></filter>
</defs></svg>
<div class="a" style="left:14px;top:142px;width:512px;height:513px;overflow:hidden;background:#fff"><div class="a" style="left:-14px;top:-142px;width:1109px;height:1013px">
<div class="a" style="left:14px;top:141.7px;width:42.500px;height:13.8px;background:#f3f0f8"></div>
<div class="a" style="left:14px;top:154.5px;width:42.500px;height:1.500px;background:#000"></div>
<div class="a" style="left:14px;top:155.5px;width:42.500px;height:15.5px;background:#addeb9"></div>
<div class="a" style="left:14px;top:170px;width:42.500px;height:1.500px;background:#000"></div>
<div class="a" style="left:14px;top:171px;width:42.500px;height:14.5px;background:#f8f7f0"></div>
<div class="a" style="left:14px;top:184.5px;width:42.500px;height:1px;background:#ddd"></div>
<div class="a" style="left:14px;top:185px;width:42.500px;height:16.5px;background:#eff6ef"></div>
<div class="a" style="left:14px;top:200.5px;width:42.500px;height:1.500px;background:#000"></div>
<div class="a" style="left:14px;top:201.5px;width:42.500px;height:15.5px;background:#b0bad5"></div>
<div class="a" style="left:14px;top:216px;width:42.500px;height:1.500px;background:#000"></div>
<div class="a" style="left:14px;top:217px;width:42.500px;height:22.5px;background:#fff"></div>
<div class="a" style="left:14px;top:238.5px;width:42.500px;height:1px;background:#ddd"></div>
<div class="a" style="left:14px;top:239px;width:42.500px;height:15px;background:#fff"></div>
<div class="a" style="left:14px;top:253px;width:42.500px;height:1px;background:#ddd"></div>
<div class="a" style="left:14px;top:253.6px;width:42.500px;height:15.4px;background:#f7f5f0"></div>
<div class="a" style="left:14px;top:268px;width:42.500px;height:1.500px;background:#000"></div>
<div class="a" style="left:14px;top:269px;width:42.500px;height:15px;background:#d0d9f2"></div>
<div class="a" style="left:56px;top:142px;width:1px;height:141px;background:#e4e4e4"></div>
<div class="a" style="left:270px;top:141.7px;width:42.500px;height:13.8px;background:#f3f0f8"></div>
<div class="a" style="left:270px;top:154.5px;width:42.500px;height:1.500px;background:#000"></div>
<div class="a" style="left:270px;top:155.5px;width:42.500px;height:15.5px;background:#addeb9"></div>
<div class="a" style="left:270px;top:170px;width:42.500px;height:1.500px;background:#000"></div>
<div class="a" style="left:270px;top:171px;width:42.500px;height:14.5px;background:#f8f7f0"></div>
<div class="a" style="left:270px;top:184.5px;width:42.500px;height:1px;background:#ddd"></div>
<div class="a" style="left:270px;top:185px;width:42.500px;height:16.5px;background:#eff6ef"></div>
<div class="a" style="left:270px;top:200.5px;width:42.500px;height:1.500px;background:#000"></div>
<div class="a" style="left:270px;top:201.5px;width:42.500px;height:15.5px;background:#b0bad5"></div>
<div class="a" style="left:270px;top:216px;width:42.500px;height:1.500px;background:#000"></div>
<div class="a" style="left:270px;top:217px;width:42.500px;height:22.5px;background:#fff"></div>
<div class="a" style="left:270px;top:238.5px;width:42.500px;height:1px;background:#ddd"></div>
<div class="a" style="left:270px;top:239px;width:42.500px;height:15px;background:#fff"></div>
<div class="a" style="left:270px;top:253px;width:42.500px;height:1px;background:#ddd"></div>
<div class="a" style="left:270px;top:253.6px;width:42.500px;height:15.4px;background:#f7f5f0"></div>
<div class="a" style="left:270px;top:268px;width:42.500px;height:1.500px;background:#000"></div>
<div class="a" style="left:270px;top:269px;width:42.500px;height:15px;background:#d0d9f2"></div>
<div class="a" style="left:312px;top:142px;width:1px;height:141px;background:#e4e4e4"></div>
<div class="a" style="left:14px;top:286px;width:512px;height:30px;background:#eff6ef"></div>
<div class="a" style="left:14px;top:316px;width:512px;height:31px;background:#f0f5fa"></div>
<div class="a" style="left:14px;top:286px;width:24px;height:30px;background:#d0d9f2"></div>
<div class="a" style="left:14px;top:317px;width:24px;height:30px;background:#f5dfd3"></div>
<div class="a" style="left:38px;top:315px;width:488px;height:2px;background:#d9d9d9"></div>
<div class="a" style="left:38px;top:346.500px;width:488px;height:1.500px;background:#d9d9d9"></div>
<div class="a" style="left:14px;top:315.500px;width:24px;height:2px;background:#000"></div>
<div class="a" style="left:14px;top:346.500px;width:24px;height:2px;background:#000"></div>
<div class="a" style="left:90px;top:286px;width:1px;height:61px;background:#d6d6d6"></div>
<div class="a" style="left:228px;top:286px;width:1px;height:61px;background:#d6d6d6"></div>
<div class="t c bi" style="left:38px;top:288.5px;width:52px">-</div>
<div class="t c bi" style="left:90px;top:288.5px;width:56px">0–0</div>
<div class="t c bi" style="left:146px;top:288.5px;width:82px">-</div>
<div class="t c bi" style="left:38px;top:319.5px;width:52px">-</div>
<div class="t c bi" style="left:90px;top:319.5px;width:56px">0–819</div>
<div class="t c bi" style="left:146px;top:319.5px;width:82px">-</div>
<div class="t" style="right:776.5px;top:361px;font-size:13px;line-height:16px;font-weight:bold">The course total and grades displayed here may not be your</div>
<div class="t b c" style="left:40px;top:377px;width:200px;font-size:13px;line-height:16px">official grades.</div>
<div class="t" style="right:757.5px;top:393px;font-size:13px;line-height:16px;">Official grades can be accessed via <span style="color:#4b6785;text-decoration:underline;text-decoration-skip-ink:none">UR Self-Service</span> once they have</div>
<div class="t c" style="left:41px;top:409px;width:200px;font-size:13px;line-height:16px">been posted.</div>
<div class="t" style="right:815.5px;top:425px;font-size:13px;line-height:16px;font-style:italic">If you have questions, please contact your instructor.</div>
<div class="t" style="right:954px;top:463px;font-size:13px;line-height:16px;font-size:12px">You are logged in as <span style="color:#4b6785;text-decoration:underline;text-decoration-skip-ink:none">Yuhan Feng</span> (<span style="color:#4b6785;text-decoration:underline;text-decoration-skip-ink:none">Logout</span>)</div>
<div class="a" style="left:-40px;top:484.500px;width:142px;height:23px;border:1px solid #b5b5b5;border-radius:3px;background:linear-gradient(#e4e4e4,#d6d6d6)"></div>
<div class="t b" style="right:1018px;top:489px;color:#444">CS 280 (Hepting)</div>
<div class="a" style="left:142px;top:405px;width:64px;height:76px;background:linear-gradient(rgba(255,255,255,.55),rgba(255,255,255,.8) 30%,rgba(255,255,255,.75) 60%,rgba(255,255,255,.7) 75%,rgba(255,255,255,.5) 95%,rgba(255,255,255,0))"></div>
<div class="a" style="left:297px;top:400px;width:229px;height:133px;background:#fff"></div>
<svg class="ic" style="left:297px;top:401px" viewBox="0 0 16 16"><use href="#i-hand"/></svg>
<div class="t lk" style="left:319px;top:402.500px">Risk/Reward-themed entry (DRAFT)</div>
<div class="a" style="left:56px;top:282px;width:470px;height:2px;background:#d3dbf3"></div>
<svg class="a" style="left:142px;top:142px" width="64" height="8"><rect width="64" height="8" filter="url(#gfull)"/></svg>
<svg class="a" style="left:142px;top:278px;mix-blend-mode:multiply" width="64" height="127"><rect width="64" height="127" filter="url(#gfull)"/></svg><div class="a" style="left:142px;top:278px;width:64px;height:127px;background:linear-gradient(90deg,rgba(0,200,200,.2),rgba(255,0,130,.24) 14%,rgba(255,0,130,.24) 24%,rgba(0,210,160,.24) 38%,rgba(0,210,160,.24) 58%,rgba(255,0,130,.24) 66%,rgba(255,0,130,.18) 72%,rgba(0,200,200,.24) 82%,rgba(255,0,130,.26) 94%)"></div>
<svg class="a" style="left:206px;top:286px" width="40" height="130"><rect width="40" height="130" filter="url(#gsp2)" opacity=".35"/></svg>
<svg class="a" style="left:398px;top:142px" width="64" height="8"><rect width="64" height="8" filter="url(#gfull)"/></svg>
<svg class="a" style="left:398px;top:278px;mix-blend-mode:multiply" width="64" height="122.5"><rect width="64" height="127" filter="url(#gfull)"/></svg><div class="a" style="left:398px;top:278px;width:64px;height:122.5px;background:linear-gradient(90deg,rgba(0,200,200,.2),rgba(255,0,130,.24) 14%,rgba(255,0,130,.24) 24%,rgba(0,210,160,.24) 38%,rgba(0,210,160,.24) 58%,rgba(255,0,130,.24) 66%,rgba(255,0,130,.18) 72%,rgba(0,200,200,.24) 82%,rgba(255,0,130,.26) 94%)"></div>
<svg class="a" style="left:462px;top:286px" width="40" height="130"><rect width="40" height="130" filter="url(#gsp2)" opacity=".35"/></svg>
<div class="a" style="left:14px;top:283.500px;width:512px;height:3px;background:#000"></div>
<div class="a" style="left:14px;top:285.200px;width:23px;height:1px;background:#d8def0"></div>
<div class="a" style="left:142px;top:315px;width:64px;height:1.500px;background:rgba(200,200,200,.6)"></div>
<svg class="a" style="left:14px;top:142px" width="512" height="136"><rect width="512" height="136" filter="url(#gsp1)" opacity=".3"/></svg>
<svg class="a" style="left:14px;top:278px" width="512" height="154"><rect width="512" height="154" filter="url(#gsp1)"/></svg>
<svg class="a" style="left:14px;top:432px" width="512" height="100"><rect width="512" height="100" filter="url(#gsp1)" opacity=".45"/></svg>
<svg class="a" style="left:206px;top:142px" width="64" height="9"><rect width="64" height="9" filter="url(#gsp2)" opacity=".6"/></svg>
<svg class="a" style="left:206px;top:276px" width="64" height="7"><rect width="64" height="7" filter="url(#gsp2)" opacity=".5"/></svg>
<svg class="a" style="left:462px;top:142px" width="64" height="9"><rect width="64" height="9" filter="url(#gsp2)" opacity=".6"/></svg>
<svg class="a" style="left:462px;top:276px" width="64" height="7"><rect width="64" height="7" filter="url(#gsp2)" opacity=".5"/></svg>
<div class="a" style="left:14px;top:532.5px;width:283px;height:121.5px;background:#000;overflow:hidden"><svg class="a" style="left:0;top:0" width="283" height="121.5"><rect width="283" height="121.5" filter="url(#gstk)"/></svg><div class="a" style="left:0;top:-0px;width:100%;height:122px;background:repeating-linear-gradient(#000 0,#000 5.700px,rgba(0,0,0,0) 6px,rgba(0,0,0,0) 8.100px,#000 8.400px)"></div><svg class="a" style="left:0;top:0" width="283" height="121.5"><rect width="283" height="121.5" filter="url(#gdk)"/></svg></div>
<div class="a" style="left:297px;top:548px;width:216px;height:106px;background:#000;overflow:hidden"><svg class="a" style="left:0;top:0" width="216" height="106"><rect width="216" height="106" filter="url(#gstk)"/></svg><div class="a" style="left:0;top:-15.5px;width:100%;height:122px;background:repeating-linear-gradient(#000 0,#000 5.700px,rgba(0,0,0,0) 6px,rgba(0,0,0,0) 8.100px,#000 8.400px)"></div><svg class="a" style="left:0;top:0" width="216" height="106"><rect width="216" height="106" filter="url(#gdk)"/></svg></div>
<div class="a" style="left:513px;top:532.5px;width:13px;height:121.5px;background:#000;overflow:hidden"><svg class="a" style="left:0;top:0" width="13" height="121.5"><rect width="13" height="121.5" filter="url(#gstk)"/></svg><div class="a" style="left:0;top:-0px;width:100%;height:122px;background:repeating-linear-gradient(#000 0,#000 5.700px,rgba(0,0,0,0) 6px,rgba(0,0,0,0) 8.100px,#000 8.400px)"></div><svg class="a" style="left:0;top:0" width="13" height="121.5"><rect width="13" height="121.5" filter="url(#gdk)"/></svg></div>
<div class="a" style="left:142px;top:532.5px;width:64px;height:121.5px;background:rgba(0,0,0,.5)"></div>
<div class="a" style="left:398px;top:548px;width:64px;height:106px;background:rgba(0,0,0,.5)"></div>
<svg class="ic" style="left:297px;top:517.500px" viewBox="0 0 16 16"><use href="#i-hand"/></svg>
<div class="t lk" style="left:297px;top:519px;white-space:normal;width:235px;text-indent:22px">COMMENT on risk/reward-themed<br>entry</div>
</div></div>
<div id="tb"></div>
<div id="tabs"></div>
<!-- traffic lights -->
<div class="a" style="left:22px;top:15px;width:12px;height:12px;border-radius:50%;border:1px solid #a4a4a4;background:linear-gradient(#dcdcdc,#f6f6f6)"></div>
<div class="a" style="left:42px;top:15px;width:12px;height:12px;border-radius:50%;border:1px solid #a4a4a4;background:linear-gradient(#dcdcdc,#f6f6f6)"></div>
<div class="a" style="left:62px;top:15px;width:12px;height:12px;border-radius:50%;border:1px solid #a4a4a4;background:linear-gradient(#dcdcdc,#f6f6f6)"></div>
<div class="a ui" style="left:14px;top:14px;width:1081px;text-align:center;font-size:12px;line-height:16px;color:#7b7b7b;text-shadow:0 1px 0 rgba(255,255,255,.7);font-family:'DejaVu Sans',sans-serif">Grades: View</div>
<!-- fullscreen icon -->
<svg class="a" style="left:1075px;top:12.500px" width="16" height="16" viewBox="0 0 14 14"><g fill="#b4b4b4"><path d="M13.500.5v5l-1.700-1.700-2.300 2.300-1.600-1.600 2.300-2.300L8.500.5z"/><path d="M.5 13.500v-5l1.700 1.700 2.300-2.300 1.600 1.600-2.300 2.300 1.700 1.700z"/></g></svg>
<!-- nav buttons -->
<div class="btn" style="left:22px;width:53px"></div>
<div class="a" style="left:48px;top:36px;width:1px;height:18px;background:#b9b9b9"></div>
<svg class="a" style="left:30px;top:40px" width="10" height="10"><path d="M9 0.500v9L1 5z" fill="#a0a0a0"/></svg>
<svg class="a" style="left:56px;top:40px" width="10" height="10"><path d="M1 0.500v9L9 5z" fill="#8f8f8f"/></svg>
<div class="btn" style="left:83px;width:29px"></div>
<svg class="a" style="left:87px;top:37px" width="21" height="16" viewBox="0 0 21 16"><path d="M5.500 13.500c-2.200 0-3.800-1.500-3.800-3.400 0-1.700 1.200-3 2.800-3.300C4.800 4.300 6.800 2.500 9.300 2.500c2 0 3.700 1.100 4.500 2.800 2.600-.2 4.600 1.700 4.600 4.100 0 2.300-1.800 4.100-4.200 4.100z" fill="none" stroke="#7f7f7f" stroke-width="1.600" stroke-linejoin="round"/></svg>
<div class="btn" style="left:120px;width:28px"></div>
<svg class="a" style="left:126px;top:37px" width="18" height="16" viewBox="0 0 18 16"><path d="M7 4.500H2.500v9h11V10" fill="none" stroke="#9a9a9a" stroke-width="1.800"/><path d="M5.500 11c.3-3.800 2.500-5.800 6.500-6V2l5 4.300-5 4.300V7.700c-3-.1-5 .9-6.500 3.300z" fill="#8a8a8a"/></svg>
<div class="btn" style="left:156px;width:28px"></div>
<svg class="a" style="left:161px;top:36px" width="18" height="18" viewBox="0 0 18 18"><path d="M5.700 1h6.600L17 5.700v6.600L12.300 17H5.700L1 12.300V5.700z" fill="#9b9b9b"/><path d="M6 9.500V5.800c0-.9 1.200-.9 1.200 0V4.600c0-.9 1.300-.9 1.300 0V4.200c0-.9 1.300-.9 1.300 0v.7c0-.9 1.300-.9 1.300 0v4l.8-1.500c.5-.8 1.600-.3 1.200.6l-1.900 4.300c-.4.900-1 1.400-2 1.400H8.600c-1.500 0-2.600-1-2.600-2.500z" fill="#cfcfcf"/></svg>
<!-- plus + url field -->
<div class="btn" style="left:192px;width:726px;background:#fff;border-color:#a0a0a0;box-shadow:inset 0 1px 2px rgba(0,0,0,.18),0 1px 0 rgba(255,255,255,.6)"></div>
<div class="a" style="left:193px;top:35px;width:28px;height:20px;border-radius:3px 0 0 3px;background:linear-gradient(#f7f7f7,#e2e2e2);border-right:1px solid #a8a8a8"></div>
<svg class="a" style="left:200px;top:38px" width="14" height="14"><path d="M7 1.500v11M1.500 7h11" stroke="#7a7a7a" stroke-width="1.700"/></svg>
<!-- UR favicon -->
<div class="a" style="left:227px;top:37px;width:15px;height:16px;font:bold 14px 'Liberation Serif',serif;color:#111;line-height:16px"><span style="position:absolute;left:0;top:-3px;font-size:8px">U</span><span style="position:absolute;left:0;top:3px;font-size:6px">of</span><span style="position:absolute;left:4px;top:1px">R</span></div>
<div class="a ui" style="left:246px;top:38px;width:48px;height:15px;border-radius:3px;background:#dedede;border:1px solid #c6c6c6;font:bold 11px 'DejaVu Sans Condensed',sans-serif;color:#777;line-height:13px;padding-left:3px">https</div>
<svg class="a" style="left:282.500px;top:40px" width="8" height="10" viewBox="0 0 8 10"><rect x="0" y="4" width="8" height="6" rx="1" fill="#8c8c8c"/><path d="M1.700 4.500V3a2.300 2.300 0 0 1 4.600 0v1.500" fill="none" stroke="#8c8c8c" stroke-width="1.300"/></svg>
<div class="a ui" style="left:298.500px;top:38px;font-size:12.800px;line-height:16px;white-space:nowrap;color:#000">urcourses.uregina.ca<span style="color:#949494;letter-spacing:.3px">/grade/report/user/index.php?id=1458</span></div>
<!-- reload -->
<svg class="a" style="left:835px;top:38px" width="13" height="14" viewBox="0 0 13 14"><path d="M10.300 8.200a4 4 0 1 1-1.600-4" fill="none" stroke="#555" stroke-width="1.700"/><path d="M6.800 1l4.400 1.600-3 3.400z" fill="#555"/></svg>
<div class="a" style="left:853px;top:35px;width:64px;height:20px;border-radius:0 3px 3px 0;background:linear-gradient(#f9f9f9,#e6e6e6);border-left:1px solid #b4b4b4"></div>
<div class="a ui" style="left:853px;top:38px;width:64px;text-align:center;font-size:13px;line-height:16px;color:#c3c3c3">Reader</div>
<!-- right buttons -->
<div class="btn" style="left:926px;width:28px"></div>
<svg class="a" style="left:931px;top:37px" width="18" height="16" viewBox="0 0 18 16"><path d="M1.500 8.500L9 1.800l7.500 6.700" fill="none" stroke="#8a8a8a" stroke-width="1.500"/><path d="M4 8v6h10V8L9 3.500z" fill="none" stroke="#8a8a8a" stroke-width="1.200"/><rect x="7.500" y="9.500" width="3" height="4.500" fill="#8a8a8a"/><rect x="12" y="2.500" width="1.800" height="3.500" fill="#8a8a8a"/></svg>
<div class="btn" style="left:962px;width:28px"></div>
<svg class="a" style="left:967px;top:39px" width="18" height="13" viewBox="0 0 18 13"><rect x=".7" y=".7" width="16.600" height="11.600" fill="#f4f4f4" stroke="#8a8a8a" stroke-width="1.300"/><path d="M1 1l8 6.500L17 1M1 12l6-5.500M17 12l-6-5.500" fill="none" stroke="#8a8a8a" stroke-width="1"/></svg>
<div class="btn" style="left:998px;width:53px"></div>
<div class="a" style="left:1024px;top:36px;width:1px;height:18px;background:#c6c6c6"></div>
<div class="a ui" style="left:998px;top:39px;width:26px;text-align:center;font-size:11px;line-height:14px;color:#8a8a8a;font-family:'DejaVu Sans',sans-serif">A</div>
<div class="a ui" style="left:1025px;top:35px;width:26px;text-align:center;font-size:16px;line-height:20px;color:#8a8a8a;font-family:'DejaVu Sans',sans-serif">A</div>
<div class="btn" style="left:1059px;width:28px"></div>
<svg class="a" style="left:1065px;top:37px" width="16" height="16" viewBox="0 0 16 16"><circle cx="8" cy="8" r="7" fill="#949494"/><path d="M6 3.500h4v4.300h2.600L8 12.500 3.400 7.800H6z" fill="#e9e9e9"/></svg>
<!-- bookmarks bar -->
<svg class="a" style="left:24px;top:62px" width="19" height="14" viewBox="0 0 19 14"><path d="M9.500 2.500C7.500.8 4 .8 1.500 1.800v10c2.500-1 6-1 8 .7 2-1.700 5.500-1.700 8-.7v-10c-2.500-1-6-1-8 .7zM9.500 2.500v10" fill="#f4f4f4" stroke="#6e6e6e" stroke-width="1.200" stroke-linejoin="round"/></svg>
<svg class="a" style="left:56px;top:63.500px" width="16" height="11" viewBox="0 0 16 11"><g fill="#777"><rect x="0" y="0" width="3" height="2"/><rect x="4.1" y="0" width="3" height="2"/><rect x="8.2" y="0" width="3" height="2"/><rect x="12.3" y="0" width="3" height="2"/><rect x="0" y="2.9" width="3" height="2"/><rect x="4.1" y="2.9" width="3" height="2"/><rect x="8.2" y="2.9" width="3" height="2"/><rect x="12.3" y="2.9" width="3" height="2"/><rect x="0" y="5.8" width="3" height="2"/><rect x="4.1" y="5.8" width="3" height="2"/><rect x="8.2" y="5.8" width="3" height="2"/><rect x="12.3" y="5.8" width="3" height="2"/><rect x="0" y="8.7" width="3" height="2"/><rect x="4.1" y="8.7" width="3" height="2"/><rect x="8.2" y="8.7" width="3" height="2"/><rect x="12.3" y="8.7" width="3" height="2"/></g></svg>
<div class="bm" style="left:87px">CS 280 (62 unread)</div>
<div class="bm" style="left:212px">FAITH » BLOG</div>
<div class="bm" style="left:305px">CS320</div>
<div class="bm" style="left:357px">280 book</div>
<div class="bm" style="left:426px">Mathematics 221</div>
<div class="bm" style="left:538px">LAB</div>
<div class="bm" style="left:576px"><span class="cj">人人</span></div>
<div class="bm" style="left:613px">V2EX</div>
<div class="bm" style="left:658px"><span class="cj">与佛论禅</span></div>
<div class="bm" style="left:718px">D2L</div>
<div class="bm" style="left:755px"><span class="cj">豆瓣</span></div>
<div class="bm" style="left:792px">sg</div>
<div class="bm" style="left:821px">BBS</div>
<div class="bm" style="left:857px">rn</div>
<div class="bm" style="left:885px">Gosu</div>
<div class="bm" style="left:929px">AC</div>
<div class="bm" style="left:961px">B<span class="cj">站</span></div>
<div class="bm" style="left:994px">UR</div>
<div class="bm" style="left:1025px"><span class="cj">煎蛋</span></div>
<!-- tabs -->
<div class="tabgrp" style="left:14px;width:618px;border-radius:0 6px 0 0;border-right:1px solid #a9a9a9"></div>
<div class="tabgrp" style="left:833px;width:262px;border-radius:6px 0 0 0;border-left:1px solid #a9a9a9"></div>
<div class="tab" style="left:14px;width:214px">CS315 Lab – Computer G…</div>
<div class="tab" style="left:228px;width:202px">7.5 glutMouseFunc</div>
<div class="tab" style="left:430px;width:202px">Introduction to Visual C++</div>
<div class="tab on" style="left:632px;width:201px">Grades: View</div>
<div class="tab" style="left:833px;width:196px">www2.cs.uregina.ca/~h…</div>
<div class="tabsep" style="left:226px"></div>
<div class="tabsep" style="left:428px"></div>
<div class="tabsep r" style="left:1023.500px"></div>
<div class="tabsep r" style="left:1056.500px"></div>
<svg class="a" style="left:1041.500px;top:87.500px" width="10" height="10"><path d="M5 1v8M1 5h8" stroke="#858585" stroke-width="1.700"/></svg>
<svg class="a" style="left:1070px;top:88px" width="17" height="9" viewBox="0 0 17 9"><rect x="0" y="0" width="1.300" height="9" fill="#777"/><rect x="15.700" y="0" width="1.300" height="9" fill="#777"/><rect x="3" y="0" width="11" height="9" fill="#a4a4a4"/></svg>

</div></div></body></html>
